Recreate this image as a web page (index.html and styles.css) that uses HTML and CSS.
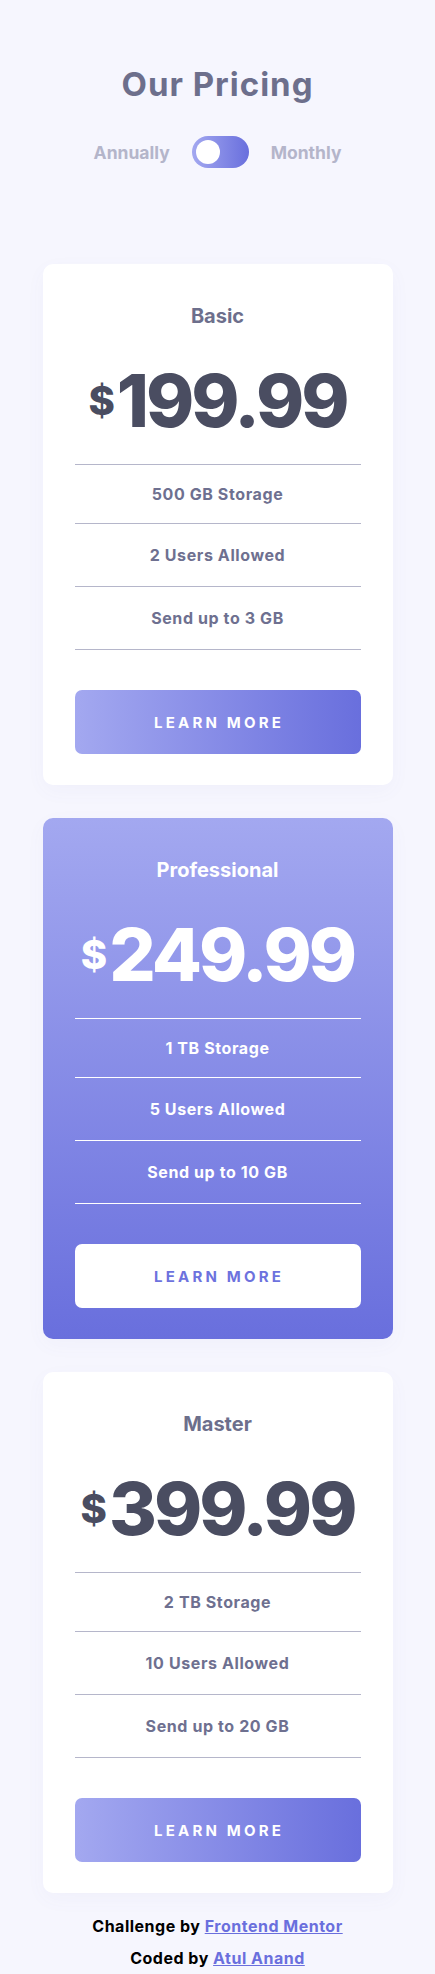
FILE: index.html
```html
<!DOCTYPE html>
<html lang="en">
<head>
<meta charset="utf-8">
<title>Pricing</title>
<link rel="stylesheet" href="styles.css">
</head>
<body>
<header class="header">
  <h1 class="title">Our Pricing</h1>
  <div class="switch-row">
    <span class="switch-label">Annually</span>
    <span class="switch"><span class="knob"></span></span>
    <span class="switch-label">Monthly</span>
  </div>
</header>
<main class="cards">
  <section class="card">
    <h2 class="plan">Basic</h2>
    <div class="price"><span class="dollar">$</span><span class="amount">199.99</span></div>
    <ul class="features">
      <li>500 GB Storage</li>
      <li>2 Users Allowed</li>
      <li>Send up to 3 GB</li>
    </ul>
    <a class="btn" href="#">LEARN MORE</a>
  </section>
  <section class="card card-featured">
    <h2 class="plan">Professional</h2>
    <div class="price"><span class="dollar">$</span><span class="amount">249.99</span></div>
    <ul class="features">
      <li>1 TB Storage</li>
      <li>5 Users Allowed</li>
      <li>Send up to 10 GB</li>
    </ul>
    <a class="btn" href="#">LEARN MORE</a>
  </section>
  <section class="card">
    <h2 class="plan">Master</h2>
    <div class="price"><span class="dollar">$</span><span class="amount">399.99</span></div>
    <ul class="features">
      <li>2 TB Storage</li>
      <li>10 Users Allowed</li>
      <li>Send up to 20 GB</li>
    </ul>
    <a class="btn" href="#">LEARN MORE</a>
  </section>
</main>
<footer class="attribution">
  <p>Challenge by <a href="#">Frontend Mentor</a></p>
  <p>Coded by <a href="#">Atul Anand</a></p>
</footer>
</body>
</html>
```

FILE: styles.css
```css
* { box-sizing: border-box; }

html, body { margin: 0; padding: 0; }

body {
  background: #f6f6fe;
  font-family: Inter, "Open Sans", sans-serif;
  font-weight: 700;
  color: #6e7090;
}

.header {
  padding-top: 64px;
  display: flex;
  flex-direction: column;
  align-items: center;
}

.title {
  margin: 0;
  font-size: 33px;
  line-height: 40px;
  font-weight: 700;
  letter-spacing: 1px;
  color: #6d6f8c;
}

.switch-row {
  margin-top: 32px;
  display: flex;
  align-items: center;
  gap: 22px;
  height: 32px;
}

.switch-label {
  font-size: 17.5px;
  color: #b4b5ca;
}

.switch {
  width: 57px;
  height: 32px;
  border-radius: 16px;
  background: linear-gradient(90deg, #a3a8f0, #696fdd);
  display: flex;
  align-items: center;
  padding-left: 4px;
}

.knob {
  width: 24px;
  height: 24px;
  border-radius: 50%;
  background: #fff;
}

.cards {
  margin-top: 96px;
  display: flex;
  flex-direction: column;
  align-items: center;
  gap: 33px;
}

.card {
  width: 350px;
  background: #fff;
  border-radius: 10px;
  padding: 40px 32px 31px;
  display: flex;
  flex-direction: column;
  align-items: stretch;
  text-align: center;
  box-shadow: 0 6px 20px rgba(100, 105, 180, 0.04);
}

.plan {
  margin: 0;
  font-size: 20px;
  line-height: 24px;
  color: #6d6f8c;
}

.price {
  margin-top: 33px;
  height: 80px;
  display: flex;
  justify-content: center;
  align-items: flex-start;
  color: #4a4d61;
  font-weight: 800;
}

.dollar {
  font-size: 40px;
  line-height: 40px;
  margin-top: 20px;
  margin-right: 2px;
}

.amount {
  font-size: 73px;
  line-height: 80px;
  letter-spacing: -3px;
}

.features {
  list-style: none;
  margin: 23px 0 0;
  padding: 0;
  border-top: 1px solid #b5b6ca;
}

.features li {
  padding: 19px 0;
  font-size: 16px;
  line-height: 24px;
  letter-spacing: 0.6px;
  color: #6e7090;
  border-bottom: 1px solid #b5b6ca;
}

.features li:first-child {
  padding: 17px 0;
}

.btn {
  margin-top: 40px;
  height: 64px;
  border-radius: 7px;
  background: linear-gradient(90deg, #a3a8f0, #696fdd);
  color: #fff;
  text-decoration: none;
  font-size: 15px;
  letter-spacing: 3.2px;
  padding-left: 3.2px;
  display: flex;
  align-items: center;
  justify-content: center;
}

.card-featured {
  background: linear-gradient(180deg, #a3a8f0, #696fdd);
}

.card-featured .plan,
.card-featured .price,
.card-featured .features li {
  color: #fff;
}

.card-featured .features {
  border-top-color: #fff;
}

.card-featured .features li {
  border-bottom-color: #fff;
}

.card-featured .btn {
  background: #fff;
  color: #6d72de;
}

.attribution {
  padding: 17px 0 0;
  text-align: center;
  color: #000;
  font-size: 16px;
  letter-spacing: 0.5px;
}

.attribution p {
  margin: 0;
  line-height: 32px;
}

.attribution a {
  color: #6a6fdd;
}
```
